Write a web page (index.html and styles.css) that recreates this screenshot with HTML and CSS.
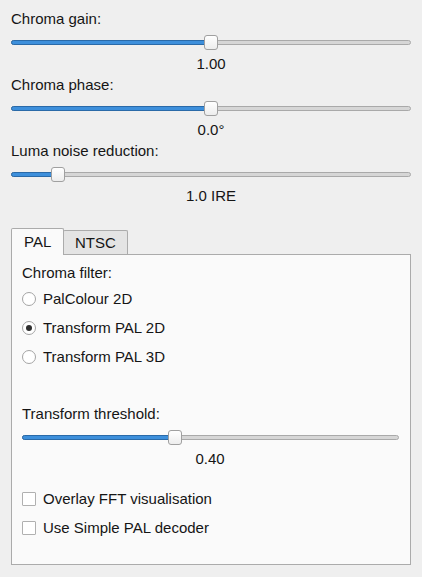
FILE: index.html
```html
<!DOCTYPE html>
<html>
<head>
<meta charset="utf-8">
<link rel="stylesheet" href="styles.css">
</head>
<body>
<div class="root">
  <div class="group">
    <div class="label">Chroma gain:</div>
    <div class="slider"><div class="groove"><div class="fill" style="width:199px"></div></div><div class="handle" style="left:193px"></div></div>
    <div class="value">1.00</div>
  </div>
  <div class="group">
    <div class="label">Chroma phase:</div>
    <div class="slider"><div class="groove"><div class="fill" style="width:199px"></div></div><div class="handle" style="left:193px"></div></div>
    <div class="value">0.0°</div>
  </div>
  <div class="group">
    <div class="label">Luma noise reduction:</div>
    <div class="slider"><div class="groove"><div class="fill" style="width:45px"></div></div><div class="handle" style="left:40px"></div></div>
    <div class="value">1.0 IRE</div>
  </div>

  <div class="tabs">
    <div class="tabbar">
      <div class="tab active">PAL</div>
      <div class="tab">NTSC</div>
    </div>
    <div class="panel">
      <div class="plabel">Chroma filter:</div>
      <div class="opts">
        <div class="opt"><span class="radio"></span>PalColour 2D</div>
        <div class="opt"><span class="radio checked"></span>Transform PAL 2D</div>
        <div class="opt"><span class="radio"></span>Transform PAL 3D</div>
      </div>
      <div class="tlabel">Transform threshold:</div>
      <div class="slider"><div class="groove"><div class="fill" style="width:152px"></div></div><div class="handle" style="left:146px"></div></div>
      <div class="value">0.40</div>
      <div class="checks">
        <div class="opt"><span class="check"></span>Overlay FFT visualisation</div>
        <div class="opt"><span class="check"></span>Use Simple PAL decoder</div>
      </div>
    </div>
  </div>
</div>
</body>
</html>
```
FILE: styles.css
```css
html, body {
  margin: 0;
  padding: 0;
  background: #efefef;
  width: 422px;
  height: 577px;
  overflow: hidden;
}
body {
  font-family: "Liberation Sans", Arial, sans-serif;
  font-size: 15px;
  color: #151515;
}
.root {
  padding: 10px 11px 0 11px;
  display: flex;
  flex-direction: column;
}
.group {
  display: flex;
  flex-direction: column;
  margin-bottom: 3px;
}
.label, .value, .plabel, .tlabel {
  height: 18px;
  line-height: 18px;
}
.label { margin-bottom: 3px; }
.value {
  text-align: center;
  margin-top: 2px;
}
.slider {
  position: relative;
  height: 22px;
  display: flex;
  align-items: center;
}
.groove {
  flex: 1;
  height: 3px;
  border: 1px solid #a9a9a9;
  background: #d6d6d6;
  border-radius: 3px;
  position: relative;
}
.fill {
  position: absolute;
  left: -1px;
  top: -1px;
  height: 3px;
  border: 1px solid #2a6aa8;
  background: #3d8fdb;
  border-radius: 3px 0 0 3px;
}
.handle {
  position: absolute;
  top: 4px;
  width: 12px;
  height: 13px;
  border: 1px solid #a0a0a0;
  border-radius: 3px;
  background: linear-gradient(#ffffff, #ededed);
}
.tabs {
  margin-top: 20px;
  display: flex;
  flex-direction: column;
}
.tabbar {
  display: flex;
  align-items: flex-end;
  height: 26px;
  position: relative;
  z-index: 1;
}
.tab {
  height: 24px;
  line-height: 24px;
  border: 1px solid #ababab;
  border-bottom: none;
  border-radius: 2px 2px 0 0;
  background: #e4e4e4;
  margin-left: -1px;
  box-sizing: border-box;
  width: 65px;
  padding-left: 11px;
}
.tab.active {
  height: 27px;
  line-height: 26px;
  margin-left: 0;
  margin-bottom: -1px;
  width: 53px;
  padding-left: 12px;
  background: #fafafa;
  position: relative;
  z-index: 2;
}
.panel {
  height: 311px;
  border: 1px solid #ababab;
  background: #fafafa;
  padding: 0 12px 0 10px;
  box-sizing: border-box;
  display: flex;
  flex-direction: column;
}
.plabel { margin-top: 9px; }
.opts {
  display: flex;
  flex-direction: column;
  margin-top: 2px;
}
.opt {
  height: 29px;
  display: flex;
  align-items: center;
}
.radio {
  width: 12px;
  height: 12px;
  border: 1px solid #a4a4a4;
  border-radius: 50%;
  background: #fff;
  margin-right: 7px;
  position: relative;
  flex: none;
}
.radio.checked::after {
  content: "";
  position: absolute;
  left: 3px;
  top: 3px;
  width: 6px;
  height: 6px;
  border-radius: 50%;
  background: #2e2e2e;
}
.tlabel { margin-top: 34px; }
.panel .slider { margin-top: 3px; margin-right: -1px; }
.checks {
  display: flex;
  flex-direction: column;
  margin-top: 16px;
}
.check {
  width: 12px;
  height: 12px;
  border: 1px solid #b0b0b0;
  border-radius: 1px;
  background: #fff;
  margin-right: 7px;
  flex: none;
}
```
